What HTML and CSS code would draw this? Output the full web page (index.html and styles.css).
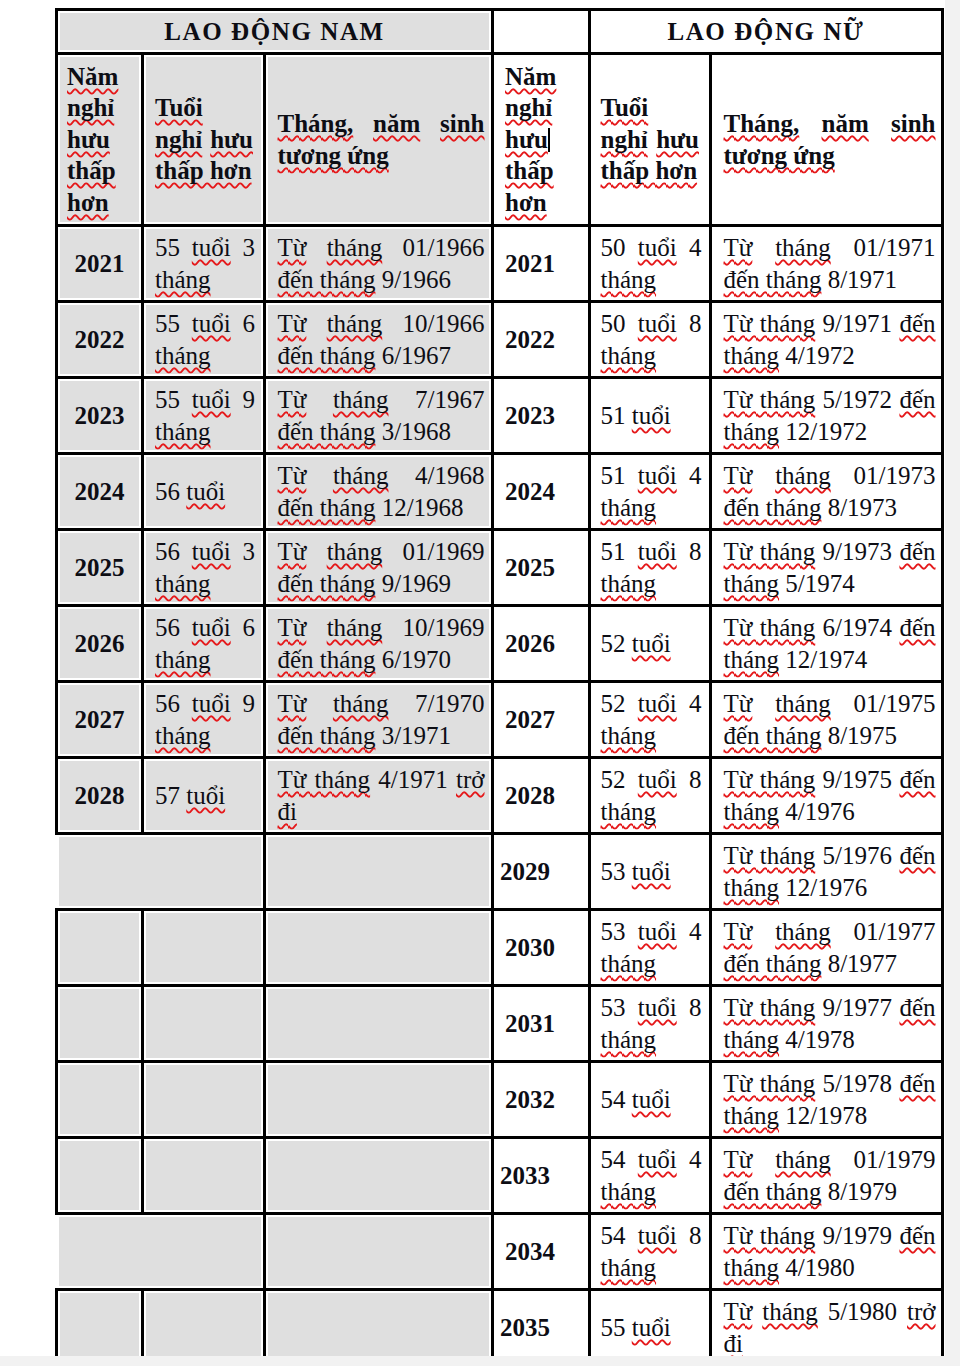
FILE: index.html
```html
<!DOCTYPE html>
<html lang="vi">
<head>
<meta charset="utf-8">
<title>Lộ trình nghỉ hưu thấp hơn</title>
<link rel="stylesheet" href="styles.css">
</head>
<body>
<div class="page">
<table class="grid">
<colgroup><col class="w1"><col class="w2"><col class="w3"><col class="w4"><col class="w5"><col class="w6"></colgroup>
<tr class="r-title">
<th colspan="3" class="g title">LAO ĐỘNG NAM</th>
<th></th>
<th colspan="2" class="title">LAO ĐỘNG NỮ</th>
</tr>
<tr class="r-head">
<th class="g c1"><span class="sp">Năm</span> <span class="sp">nghỉ</span> <span class="sp">hưu</span> <span class="sp">thấp</span> <span class="sp">hơn</span></th>
<th class="g c2 hc2"><span class="sp">Tuổi</span> <span class="sp">nghỉ</span> <span class="sp">hưu</span> <span class="sp">thấp hơn</span></th>
<th class="g c3"><span class="sp">Tháng,</span> <span class="sp">năm</span> <span class="sp">sinh</span> <span class="sp">tương ứng</span></th>
<th class="c4"><span class="sp">Năm</span> <span class="sp">nghỉ</span> <span class="sp">hưu</span><span class="caret"></span> <span class="sp">thấp</span> <span class="sp">hơn</span></th>
<th class="c5 hc2"><span class="sp">Tuổi</span> <span class="sp">nghỉ</span> <span class="sp">hưu</span> <span class="sp">thấp hơn</span></th>
<th class="c6"><span class="sp">Tháng,</span> <span class="sp">năm</span> <span class="sp">sinh</span> <span class="sp">tương ứng</span></th>
</tr>
<tr>
<td class="g c1 yr">2021</td><td class="g c2">55 <span class="sp">tuổi</span> 3 <span class="sp">tháng</span></td><td class="g c3"><span class="sp">Từ</span> <span class="sp">tháng</span> 01/1966 <span class="sp">đến tháng</span> 9/1966</td>
<td class="c4 yr">2021</td><td class="c5">50 <span class="sp">tuổi</span> 4 <span class="sp">tháng</span></td><td class="c6"><span class="sp">Từ</span> <span class="sp">tháng</span> 01/1971 <span class="sp">đến tháng</span> 8/1971</td>
</tr>
<tr>
<td class="g c1 yr">2022</td><td class="g c2">55 <span class="sp">tuổi</span> 6 <span class="sp">tháng</span></td><td class="g c3"><span class="sp">Từ</span> <span class="sp">tháng</span> 10/1966 <span class="sp">đến tháng</span> 6/1967</td>
<td class="c4 yr">2022</td><td class="c5">50 <span class="sp">tuổi</span> 8 <span class="sp">tháng</span></td><td class="c6"><span class="sp">Từ tháng</span> 9/1971 <span class="sp">đến</span> <span class="sp">tháng</span> 4/1972</td>
</tr>
<tr>
<td class="g c1 yr">2023</td><td class="g c2">55 <span class="sp">tuổi</span> 9 <span class="sp">tháng</span></td><td class="g c3"><span class="sp">Từ</span> <span class="sp">tháng</span> 7/1967 <span class="sp">đến tháng</span> 3/1968</td>
<td class="c4 yr">2023</td><td class="c5">51 <span class="sp">tuổi</span></td><td class="c6"><span class="sp">Từ tháng</span> 5/1972 <span class="sp">đến</span> <span class="sp">tháng</span> 12/1972</td>
</tr>
<tr>
<td class="g c1 yr">2024</td><td class="g c2">56 <span class="sp">tuổi</span></td><td class="g c3"><span class="sp">Từ</span> <span class="sp">tháng</span> 4/1968 <span class="sp">đến tháng</span> 12/1968</td>
<td class="c4 yr">2024</td><td class="c5">51 <span class="sp">tuổi</span> 4 <span class="sp">tháng</span></td><td class="c6"><span class="sp">Từ</span> <span class="sp">tháng</span> 01/1973 <span class="sp">đến tháng</span> 8/1973</td>
</tr>
<tr>
<td class="g c1 yr">2025</td><td class="g c2">56 <span class="sp">tuổi</span> 3 <span class="sp">tháng</span></td><td class="g c3"><span class="sp">Từ</span> <span class="sp">tháng</span> 01/1969 <span class="sp">đến tháng</span> 9/1969</td>
<td class="c4 yr">2025</td><td class="c5">51 <span class="sp">tuổi</span> 8 <span class="sp">tháng</span></td><td class="c6"><span class="sp">Từ tháng</span> 9/1973 <span class="sp">đến</span> <span class="sp">tháng</span> 5/1974</td>
</tr>
<tr>
<td class="g c1 yr">2026</td><td class="g c2">56 <span class="sp">tuổi</span> 6 <span class="sp">tháng</span></td><td class="g c3"><span class="sp">Từ</span> <span class="sp">tháng</span> 10/1969 <span class="sp">đến tháng</span> 6/1970</td>
<td class="c4 yr">2026</td><td class="c5">52 <span class="sp">tuổi</span></td><td class="c6"><span class="sp">Từ tháng</span> 6/1974 <span class="sp">đến</span> <span class="sp">tháng</span> 12/1974</td>
</tr>
<tr>
<td class="g c1 yr">2027</td><td class="g c2">56 <span class="sp">tuổi</span> 9 <span class="sp">tháng</span></td><td class="g c3"><span class="sp">Từ</span> <span class="sp">tháng</span> 7/1970 <span class="sp">đến tháng</span> 3/1971</td>
<td class="c4 yr">2027</td><td class="c5">52 <span class="sp">tuổi</span> 4 <span class="sp">tháng</span></td><td class="c6"><span class="sp">Từ</span> <span class="sp">tháng</span> 01/1975 <span class="sp">đến tháng</span> 8/1975</td>
</tr>
<tr>
<td class="g c1 yr">2028</td><td class="g c2">57 <span class="sp">tuổi</span></td><td class="g c3"><span class="sp">Từ tháng</span> 4/1971 <span class="sp">trở</span> <span class="sp">đi</span></td>
<td class="c4 yr">2028</td><td class="c5">52 <span class="sp">tuổi</span> 8 <span class="sp">tháng</span></td><td class="c6"><span class="sp">Từ tháng</span> 9/1975 <span class="sp">đến</span> <span class="sp">tháng</span> 4/1976</td>
</tr>
<tr>
<td colspan="2" class="g noleft"></td><td class="g c3"></td>
<td class="c4 yr tight">2029</td><td class="c5">53 <span class="sp">tuổi</span></td><td class="c6"><span class="sp">Từ tháng</span> 5/1976 <span class="sp">đến</span> <span class="sp">tháng</span> 12/1976</td>
</tr>
<tr>
<td class="g c1"></td><td class="g c2"></td><td class="g c3"></td>
<td class="c4 yr">2030</td><td class="c5">53 <span class="sp">tuổi</span> 4 <span class="sp">tháng</span></td><td class="c6"><span class="sp">Từ</span> <span class="sp">tháng</span> 01/1977 <span class="sp">đến tháng</span> 8/1977</td>
</tr>
<tr>
<td class="g c1"></td><td class="g c2"></td><td class="g c3"></td>
<td class="c4 yr">2031</td><td class="c5">53 <span class="sp">tuổi</span> 8 <span class="sp">tháng</span></td><td class="c6"><span class="sp">Từ tháng</span> 9/1977 <span class="sp">đến</span> <span class="sp">tháng</span> 4/1978</td>
</tr>
<tr>
<td class="g c1"></td><td class="g c2"></td><td class="g c3"></td>
<td class="c4 yr">2032</td><td class="c5">54 <span class="sp">tuổi</span></td><td class="c6"><span class="sp">Từ tháng</span> 5/1978 <span class="sp">đến</span> <span class="sp">tháng</span> 12/1978</td>
</tr>
<tr>
<td class="g c1"></td><td class="g c2"></td><td class="g c3"></td>
<td class="c4 yr tight">2033</td><td class="c5">54 <span class="sp">tuổi</span> 4 <span class="sp">tháng</span></td><td class="c6"><span class="sp">Từ</span> <span class="sp">tháng</span> 01/1979 <span class="sp">đến tháng</span> 8/1979</td>
</tr>
<tr>
<td colspan="2" class="g noleft"></td><td class="g c3"></td>
<td class="c4 yr">2034</td><td class="c5">54 <span class="sp">tuổi</span> 8 <span class="sp">tháng</span></td><td class="c6"><span class="sp">Từ tháng</span> 9/1979 <span class="sp">đến</span> <span class="sp">tháng</span> 4/1980</td>
</tr>
<tr>
<td class="g c1"></td><td class="g c2"></td><td class="g c3"></td>
<td class="c4 yr tight">2035</td><td class="c5">55 <span class="sp">tuổi</span></td><td class="c6"><span class="sp">Từ</span> <span class="sp">tháng</span> 5/1980 <span class="sp">trở</span> <span class="sp">đi</span></td>
</tr>
</table>
</div>
</body>
</html>
```

FILE: styles.css
```css
html, body {
  margin: 0;
  padding: 0;
}
body {
  background: #f2f2f2;
  width: 960px;
  height: 1366px;
  overflow: hidden;
}
.page {
  width: 945px;
  height: 1356px;
  background: #ffffff;
  overflow: hidden;
  padding-top: 8px;
  box-sizing: border-box;
}
.grid {
  border-collapse: collapse;
  table-layout: fixed;
  width: 889px;
  margin-left: 55px;
  font-family: "Liberation Serif", "Times New Roman", serif;
  font-size: 25px;
  line-height: 31.5px;
  color: #0d0d14;
}
.w1 { width: 86px; }
.w2 { width: 122px; }
.w3 { width: 228px; }
.w4 { width: 97px; }
.w5 { width: 121px; }
.w6 { width: 232px; }

.grid td,
.grid th {
  border: 3px solid #000;
  padding: 0 7px 0 11px;
  vertical-align: middle;
  text-align: justify;
  font-weight: normal;
  background: #ffffff;
  overflow: hidden;
}
.grid th { font-weight: bold; }
.grid tr { height: 76px; }
.grid .r-title { height: 44px; }
.grid .r-head { height: 172px; }

.grid .g {
  background: #dfdfdf;
  box-shadow: inset 0 0 0 2px #ffffff;
}
.grid .title {
  text-align: center;
  letter-spacing: 1.6px;
  padding: 0;
}
.grid .c1 { padding-left: 9px; padding-right: 4px; }
.grid .c2 { padding-left: 11px; padding-right: 8px; }
.grid .c3 { padding-left: 11.5px; padding-right: 6.5px; }
.grid .c4 { padding-left: 11px; padding-right: 4px; }
.grid .c5 { padding-left: 9.5px; padding-right: 7.5px; }
.grid .c6 { padding-left: 11.5px; padding-right: 5.5px; }
.grid .hc2 { padding-right: 10px; }

.grid .yr { font-weight: bold; text-align: left; }
.grid .c1.yr { text-align: center; padding: 0; }
.grid .c4.tight { padding-left: 6px; }
.grid .noleft { border-left: none; }

.sp {
  text-decoration: underline wavy #e5191b;
  text-decoration-thickness: 1.5px;
  text-underline-offset: 3px;
  text-decoration-skip-ink: none;
}
.caret {
  display: inline-block;
  width: 2px;
  height: 24px;
  background: #000;
  vertical-align: -4px;
}
```
